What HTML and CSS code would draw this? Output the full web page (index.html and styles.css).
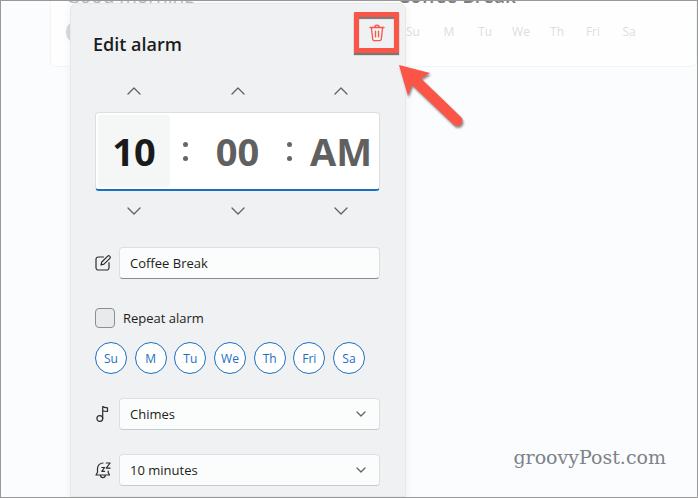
FILE: index.html
```html
<!DOCTYPE html>
<html lang="en">
<head>
    <meta charset="UTF-8">
    <meta name="viewport" content="width=device-width, initial-scale=1.0">
    <title>Edit alarm</title>
    <link rel="stylesheet" href="styles.css">
</head>
<body>
    <main class="alarms">
        <section class="card card-morning">
            <h2 class="card-title">Good morning</h2>
            <span class="day-dot"></span>
        </section>
        <section class="card card-break">
            <h2 class="card-title strong">Coffee Break</h2>
            <div class="card-days">
                <span>Su</span>
                <span>M</span>
                <span>Tu</span>
                <span>We</span>
                <span>Th</span>
                <span>Fri</span>
                <span>Sa</span>
            </div>
        </section>
    </main>

    <form class="dialog">
        <header class="dialog-header">
            <h1 class="dialog-title">Edit alarm</h1>
            <button class="delete" type="button" aria-label="Delete alarm">
                <svg width="16" height="18" viewBox="0 0 16 18" fill="none" stroke="currentColor" stroke-width="1.3" stroke-linecap="round" stroke-linejoin="round">
                    <path d="M1 3.5h14M5.8 3.3a2.2 2.2 0 0 1 4.4 0M2.4 3.7l1.3 11.5a1.6 1.6 0 0 0 1.6 1.4h5.4a1.6 1.6 0 0 0 1.6-1.4l1.3-11.5M6.5 7.2v5.6M9.5 7.2v5.6"/>
                </svg>
            </button>
            <svg class="arrow" width="70" height="70" viewBox="0 0 70 70">
                <path d="M2 2L33 10L24 15.500L64 54A5.300 5.300 0 0 1 56.500 61.500L15 22L11 33Z" fill="#fb5548"/>
            </svg>
        </header>

        <div class="time">
            <div class="steps">
                <button class="step" type="button" aria-label="Hour up"><svg width="14" height="8" viewBox="0 0 14 8"><path d="M1 7l6-6 6 6"/></svg></button>
                <button class="step" type="button" aria-label="Minute up"><svg width="14" height="8" viewBox="0 0 14 8"><path d="M1 7l6-6 6 6"/></svg></button>
                <button class="step" type="button" aria-label="Period up"><svg width="14" height="8" viewBox="0 0 14 8"><path d="M1 7l6-6 6 6"/></svg></button>
            </div>
            <div class="clock">
                <input class="clock-part active" type="text" value="10" aria-label="Hour">
                <span class="colon"></span>
                <input class="clock-part" type="text" value="00" aria-label="Minute">
                <span class="colon"></span>
                <input class="clock-part" type="text" value="AM" aria-label="Period">
            </div>
            <div class="steps">
                <button class="step" type="button" aria-label="Hour down"><svg width="14" height="8" viewBox="0 0 14 8"><path d="M1 1l6 6 6-6"/></svg></button>
                <button class="step" type="button" aria-label="Minute down"><svg width="14" height="8" viewBox="0 0 14 8"><path d="M1 1l6 6 6-6"/></svg></button>
                <button class="step" type="button" aria-label="Period down"><svg width="14" height="8" viewBox="0 0 14 8"><path d="M1 1l6 6 6-6"/></svg></button>
            </div>
        </div>

        <div class="field">
            <label class="field-icon" for="name" aria-label="Alarm name">
                <svg width="16" height="16" viewBox="0 0 16 16">
                    <path d="M8.500 2H3.300A2.300 2.300 0 0 0 1 4.300v8.400A2.300 2.300 0 0 0 3.300 15h8.400a2.300 2.300 0 0 0 2.300-2.300V7.500"/>
                    <path d="M6 10l.8-3L12.700 1.100a1.300 1.300 0 0 1 1.900 0l.3.300a1.300 1.300 0 0 1 0 1.900L9 9.200z"/>
                </svg>
            </label>
            <input class="control name" id="name" type="text" value="Coffee Break">
        </div>

        <div class="repeat">
            <input class="check" id="repeat" type="checkbox">
            <label for="repeat">Repeat alarm</label>
        </div>

        <div class="days">
            <button class="day" type="button">Su</button>
            <button class="day" type="button">M</button>
            <button class="day" type="button">Tu</button>
            <button class="day" type="button">We</button>
            <button class="day" type="button">Th</button>
            <button class="day" type="button">Fri</button>
            <button class="day" type="button">Sa</button>
        </div>

        <div class="field">
            <label class="field-icon" for="sound" aria-label="Sound">
                <svg width="16" height="18" viewBox="0 0 16 18">
                    <circle cx="4.800" cy="13.500" r="2.900"/>
                    <path d="M7.700 13.500V1.500c1 1 2.300 1.100 4.800 1.300v3.700c-2.200 0-3.800-.2-4.800-1"/>
                </svg>
            </label>
            <div class="select">
                <select class="control" id="sound">
                    <option>Chimes</option>
                </select>
                <svg class="caret" width="10" height="6" viewBox="0 0 10 6"><path d="M1 1l4 4 4-4"/></svg>
            </div>
        </div>

        <div class="field">
            <label class="field-icon" for="snooze" aria-label="Snooze">
                <svg width="16" height="18" viewBox="0 0 16 18">
                    <path d="M8 2A5.500 5.500 0 0 0 2.500 7.500v3.700L1 14h13.500l-1.300-2.500v-1.300M5.500 14.200a2.400 2.400 0 0 0 4.800 0"/>
                    <path d="M6.800 6.500h2.800L6.800 10.300h2.800M11.300 2h3.800l-3.800 5.200h3.800" stroke-width="1.4"/>
                </svg>
            </label>
            <div class="select">
                <select class="control" id="snooze">
                    <option>10 minutes</option>
                </select>
                <svg class="caret" width="10" height="6" viewBox="0 0 10 6"><path d="M1 1l4 4 4-4"/></svg>
            </div>
        </div>
    </form>

    <div class="watermark">groovyPost.com</div>
</body>
</html>
```

FILE: styles.css
```css
:root {
    --page-bg: #fbfcfe;
    --dialog-bg: #eff1f2;
    --text-color: #1b1d20;
    --accent-color: #1a6fc4;
    --danger-color: #fb5548;
    --line-color: #dcdfe1;
}
* {
    box-sizing: border-box;
}
body {
    position: relative;
    height: 100vh;
    margin: 0;
    border: 1px solid #999;
    background: var(--page-bg);
    color: var(--text-color);
    font-family: 'Open Sans', 'Noto Sans', sans-serif;
    font-size: 13px;
    overflow: hidden;
}
button, input, select {
    font-family: inherit;
    font-size: inherit;
    color: inherit;
    margin: 0;
}
svg path, svg circle {
    stroke-linecap: round;
    stroke-linejoin: round;
}

/* alarm list behind the dialog, scrolled up */
.alarms {
    display: grid;
    grid-template-columns: 320px 1fr;
    gap: 12px;
    margin: -20px 0 0 49px;
}
.card {
    height: 86px;
    padding: 0 15px;
    background: #fefefe;
    border: 1px solid #f3f4f5;
    border-radius: 6px;
}
.card-title {
    margin: 0;
    font-size: 19px;
    font-weight: 400;
    line-height: 28px;
    color: #b9babc;
}
.card-title.strong {
    font-weight: 600;
    color: #7d7e82;
}
.card-days {
    display: grid;
    grid-template-columns: repeat(7, 36px);
    margin: 14px 0 0 -3px;
    font-size: 12px;
    line-height: 16px;
    text-align: center;
    color: #dcdedf;
}
.day-dot {
    display: block;
    width: 24px;
    height: 24px;
    margin-top: 10px;
    border-radius: 50%;
    background: #d8dadc;
}

.dialog {
    position: absolute;
    top: 2px;
    bottom: 0;
    left: 69px;
    width: 336px;
    padding: 8px 25px 0 24px;
    background: var(--dialog-bg);
    border: 1px solid #e6e8e9;
    border-radius: 7px 7px 0 0;
    box-shadow: 0 2px 10px rgba(0, 0, 0, 0.06);
}
.dialog-header {
    position: relative;
    display: flex;
    justify-content: space-between;
    margin: 0 -19px 0 -2px;
}
.dialog-title {
    margin: 0;
    font-size: 18px;
    font-weight: 600;
    line-height: 64px;
}
.delete {
    display: flex;
    align-items: center;
    justify-content: center;
    width: 45px;
    height: 41px;
    padding: 0;
    background: transparent;
    border: 5px solid var(--danger-color);
    color: var(--danger-color);
    box-shadow: 0 2px 1px #777, inset 0 2px 1px #777;
}
.arrow {
    position: absolute;
    top: 51px;
    left: 304px;
    filter: drop-shadow(1px 2px 1px #888);
}

.steps {
    display: grid;
    grid-template-columns: repeat(3, 72px);
    justify-content: space-between;
    padding: 0 3px;
}
.step {
    display: flex;
    align-items: center;
    justify-content: center;
    height: 30px;
    padding: 0;
    background: none;
    border: none;
}
.step path, .caret path {
    fill: none;
    stroke: #5f6265;
    stroke-width: 1.3;
}
.clock {
    display: grid;
    grid-template-columns: 72px 1fr 72px 1fr 72px;
    height: 79px;
    margin: 6px 0 5px;
    padding: 2px;
    background: #fff;
    border: 1px solid var(--line-color);
    border-bottom: 2px solid var(--accent-color);
    border-radius: 4px;
}
.clock-part {
    width: 100%;
    padding: 0;
    background: none;
    border: none;
    border-radius: 3px;
    color: #606060;
    font-size: 38px;
    font-weight: 700;
    text-align: center;
}
.clock-part.active {
    background: #f5f7f7;
    color: #1a1a1a;
}
.colon {
    display: flex;
    flex-direction: column;
    align-items: center;
    justify-content: center;
    gap: 9px;
}
.colon::before, .colon::after {
    content: '';
    width: 5px;
    height: 5px;
    border-radius: 50%;
    background: #666;
}

.field {
    display: flex;
    align-items: center;
    gap: 8px;
    margin-top: 24px;
}
.time + .field {
    margin-top: 21px;
}
.field-icon {
    display: flex;
    width: 16px;
}
.field-icon path, .field-icon circle {
    fill: none;
    stroke: #2a2d30;
    stroke-width: 1.2;
}
.control {
    flex: 1;
    width: 100%;
    height: 32px;
    padding: 0 10px;
    background: #fbfcfc;
    border: 1px solid var(--line-color);
    border-bottom-color: #c5cace;
    border-radius: 4px;
    appearance: none;
}
.control.name {
    border-bottom-color: #868c90;
}
.select {
    position: relative;
    flex: 1;
}
.select .control {
    display: block;
}
.caret {
    position: absolute;
    top: 13px;
    right: 14px;
    pointer-events: none;
}

.repeat {
    display: flex;
    align-items: center;
    gap: 8px;
    margin-top: 29px;
}
.check {
    width: 20px;
    height: 20px;
    background: #e8eaec;
    border: 1px solid #8b8f93;
    border-radius: 4px;
    appearance: none;
}
.days {
    display: flex;
    justify-content: space-between;
    margin: 14px 15px 0 0;
}
.day {
    width: 32px;
    height: 32px;
    padding: 0;
    background: #fff;
    border: 1px solid var(--accent-color);
    border-radius: 50%;
    color: var(--accent-color);
    font-size: 12px;
}

.watermark {
    position: absolute;
    right: 31px;
    bottom: 26px;
    color: #7d8388;
    font-family: 'DejaVu Serif', serif;
    font-size: 19px;
    line-height: 28px;
}
```
